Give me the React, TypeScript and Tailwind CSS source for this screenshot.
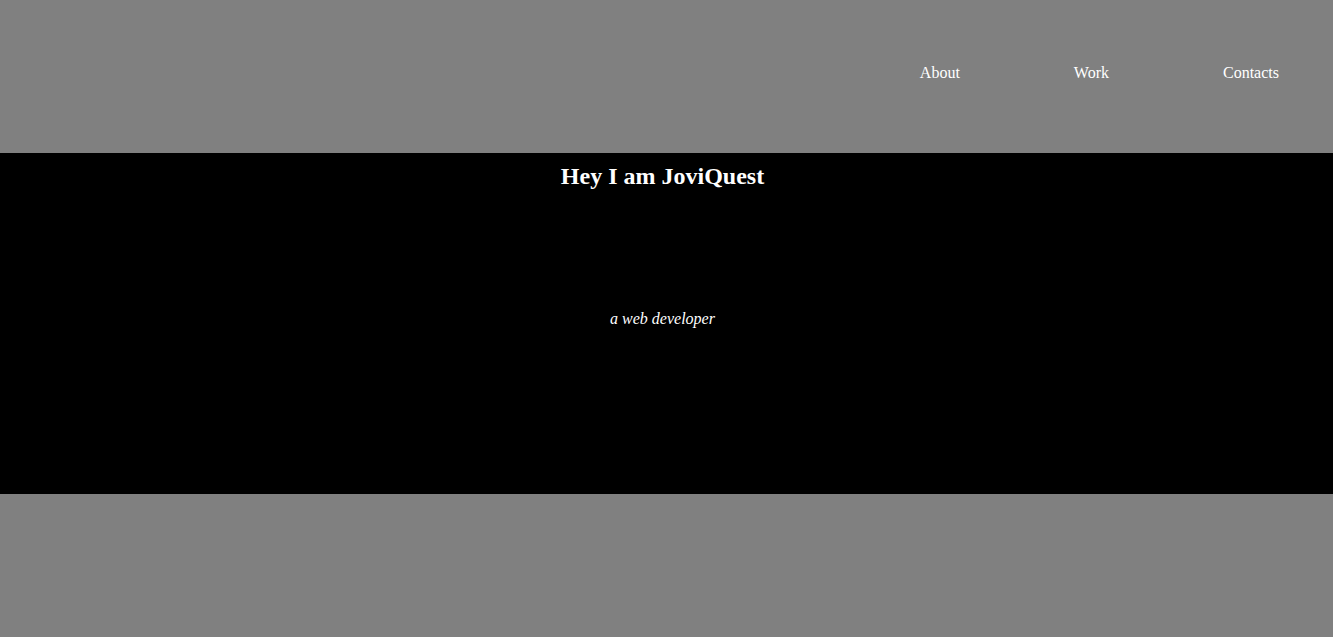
const App = () => {
  return (
    <div className="min-h-[637px] bg-[#808080] text-white font-['Liberation_Serif',serif]">
      <nav className="h-[153px] flex justify-end gap-[114px] pr-[54px] pt-[64px] text-base leading-[18px]">
        <a href="#about">About</a>
        <a href="#work">Work</a>
        <a href="#contacts">Contacts</a>
      </nav>
      <section className="h-[341px] bg-black flex flex-col items-center pt-[10px] pr-2">
        <h2 className="text-2xl font-bold leading-[27px]">Hey I am JoviQuest</h2>
        <p className="italic mt-[120px] text-base leading-[18px]">a web developer</p>
      </section>
    </div>
  );
}

export default App;
